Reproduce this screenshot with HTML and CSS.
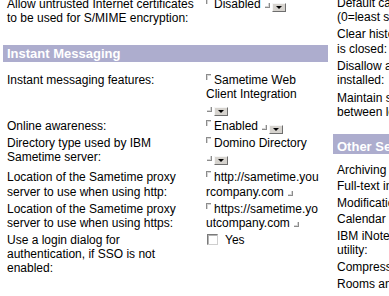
FILE: index.html
```html
<!DOCTYPE html>
<html lang="en">
<head>
<meta charset="utf-8">
<title>iNotes configuration</title>
<link rel="stylesheet" href="styles.css">
</head>
<body>
<div class="page">
  <div class="col left">
    <div class="row">
      <div class="label">Allow untrusted Internet certificates<br>to be used for S/MIME encryption:</div>
      <div class="value"><span class="sb"></span>Disabled<span class="eb"></span><span class="dd"></span></div>
    </div>

    <div class="band band-im">Instant Messaging</div>

    <div class="row">
      <div class="label">Instant messaging features:</div>
      <div class="value"><span class="sb"></span>Sametime Web<br>Client Integration<br><span class="eb solo"></span><span class="dd"></span></div>
    </div>
    <div class="row">
      <div class="label">Online awareness:</div>
      <div class="value"><span class="sb"></span>Enabled<span class="eb"></span><span class="dd"></span></div>
    </div>
    <div class="row row-dir">
      <div class="label">Directory type used by IBM<br>Sametime server:</div>
      <div class="value"><span class="sb"></span>Domino Directory<br><span class="eb solo"></span><span class="dd"></span></div>
    </div>
    <div class="row row-http">
      <div class="label">Location of the Sametime proxy<br>server to use when using http:</div>
      <div class="value url"><span class="sb"></span>http://sametime.yourcompany.com<span class="eb"></span></div>
    </div>
    <div class="row">
      <div class="label">Location of the Sametime proxy<br>server to use when using https:</div>
      <div class="value url"><span class="sb"></span>https://sametime.youtcompany.com<span class="eb"></span></div>
    </div>
    <div class="row">
      <div class="label">Use a login dialog for<br>authentication, if SSO is not<br>enabled:</div>
      <div class="value"><span class="cb"></span>Yes</div>
    </div>
  </div>

  <div class="col right">
    <div class="row up">
      <div class="label">Default cache setting for browsers<br>(0=least secure, 3=most secure):</div>
    </div>
    <div class="row up">
      <div class="label">Clear history and cache when browser<br>is closed:</div>
    </div>
    <div class="row up">
      <div class="label">Disallow access if control is not<br>installed:</div>
    </div>
    <div class="row up">
      <div class="label">Maintain session state<br>between logins:</div>
    </div>

    <div class="band band-os">Other Settings</div>

    <div class="row"><div class="label">Archiving</div></div>
    <div class="row"><div class="label">Full-text indexing:</div></div>
    <div class="row"><div class="label">Modification of mail rules:</div></div>
    <div class="row"><div class="label">Calendar</div></div>
    <div class="row row-ibm"><div class="label">IBM iNotes Social Edition<br>utility:</div></div>
    <div class="row"><div class="label">Compress HTTP responses:</div></div>
    <div class="row"><div class="label">Rooms and Resources:</div></div>
  </div>
</div>
</body>
</html>
```

FILE: styles.css
```css
html, body {
  margin: 0;
  padding: 0;
  overflow: hidden;
  background: #fff;
}

body {
  width: 389px;
  height: 296px;
  font-family: "Liberation Sans", Arial, sans-serif;
  font-size: 12px;
  line-height: 14.3px;
  color: #000;
}

.page {
  display: flex;
  align-items: flex-start;
  gap: 5px;
  padding-left: 3px;
}

.col {
  flex: none;
}

.left {
  width: 325px;
  margin-top: -4px;
}

.right {
  width: 420px;
  margin-top: -5.65px;
}

.row {
  display: flex;
  padding: 1.1px 0;
}

.row.up {
  padding: 1.5px 0;
}

.row-dir {
  padding-bottom: 4.1px;
}

.row-http {
  padding-bottom: 2.1px;
}

.row-ibm {
  padding-bottom: 2px;
}

.label {
  flex: none;
  width: 203px;
  box-sizing: border-box;
  padding-left: 4px;
}

.right .label {
  width: auto;
  white-space: nowrap;
}

.value {
  flex: none;
  width: 115.5px;
}

.url {
  word-break: break-all;
}

.band {
  background: #adadce;
  color: #fff;
  font-weight: bold;
  font-size: 13px;
  padding-left: 4px;
}

.band-im {
  height: 17px;
  line-height: 17px;
  margin: 18.2px 0 9.75px;
}

.band-os {
  padding-top: 5px;
  line-height: 15px;
  margin: 13.25px 0 7.75px;
}

/* Notes field delimiters */
.sb {
  display: inline-block;
  width: 4px;
  height: 5px;
  border-left: 1px solid #8c8c8c;
  border-top: 1px solid #8c8c8c;
  box-shadow: inset 1px 1px 0 #d6d6d6;
  vertical-align: top;
  margin: 1px 3px 0 0;
}

.eb {
  display: inline-block;
  width: 4px;
  height: 4px;
  border-right: 1px solid #8c8c8c;
  border-bottom: 1px solid #8c8c8c;
  box-shadow: inset -1px -1px 0 #d6d6d6;
  vertical-align: baseline;
  margin-left: 4px;
}

.eb.solo {
  margin-left: 1px;
}

/* dropdown button */
.dd {
  display: inline-flex;
  align-items: center;
  justify-content: center;
  box-sizing: border-box;
  width: 14px;
  height: 9px;
  margin-left: 2px;
  background: #d6d3ce;
  border: 1px solid;
  border-color: #f6f6f6 #6e6e6e #6e6e6e #f6f6f6;
  vertical-align: -1px;
}

.dd::after {
  content: "";
  width: 0;
  height: 0;
  border-top: 3px solid #000;
  border-left: 3px solid transparent;
  border-right: 3px solid transparent;
}

/* checkbox */
.cb {
  display: inline-block;
  box-sizing: border-box;
  width: 11px;
  height: 11px;
  margin: 0 7px 0 1px;
  background: #fff;
  border: 1px solid;
  border-color: #7a7a7a #cfcfcf #cfcfcf #7a7a7a;
  box-shadow: inset 1px 1px 0 #b4b4b4;
  vertical-align: -1px;
}
```
